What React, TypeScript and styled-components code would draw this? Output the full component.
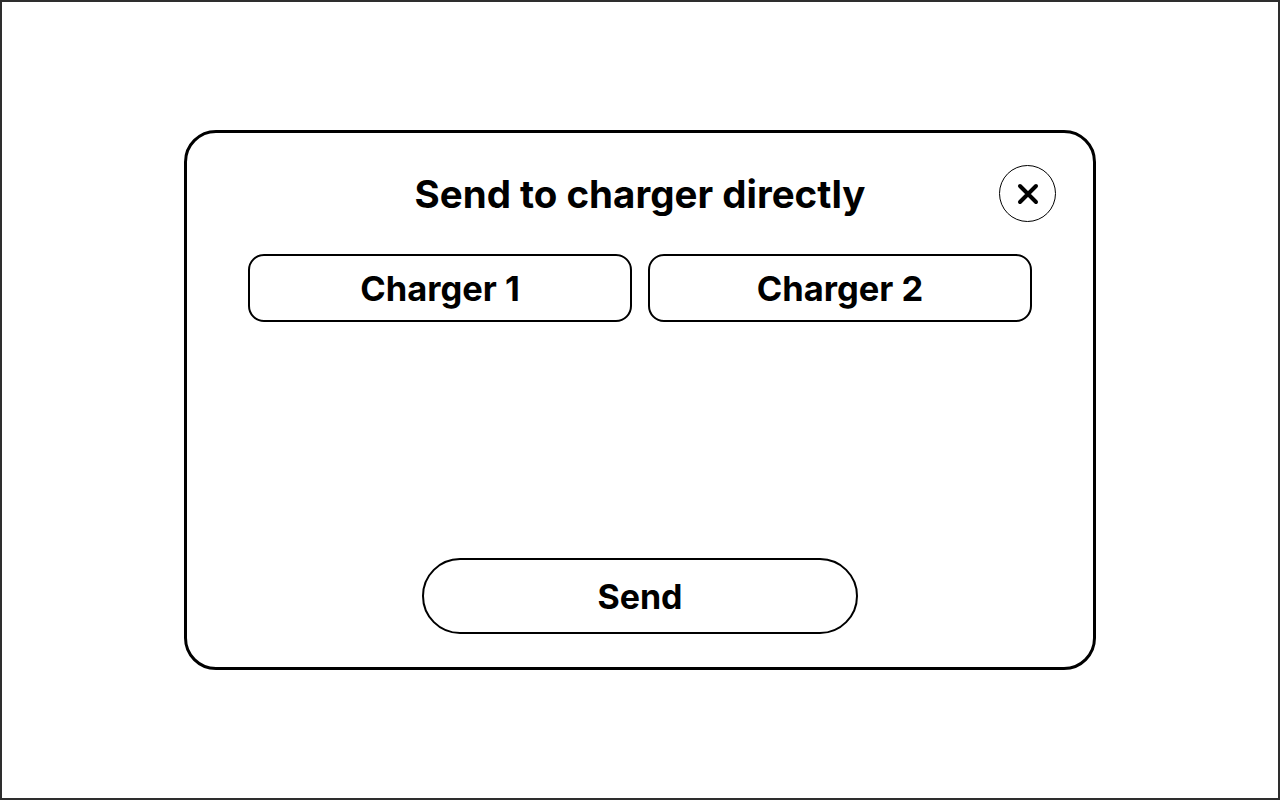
import React from 'react';
import styled, { createGlobalStyle } from 'styled-components';

const GlobalStyle = createGlobalStyle`
  * {
    box-sizing: border-box;
  }

  body {
    margin: 0;
    font-family: Inter, 'Noto Sans', sans-serif;
    color: #000;
    background: #fff;
  }
`;

const Screen = styled.div`
  width: 1280px;
  height: 800px;
  border: 2px solid #2e2e2e;
  display: flex;
  align-items: center;
  justify-content: center;
`;

const Modal = styled.div`
  width: 912px;
  height: 540px;
  border: 3px solid #000;
  border-radius: 32px;
  padding: 32px 37px 33px;
  display: flex;
  flex-direction: column;
  align-items: center;
`;

const Header = styled.div`
  width: 100%;
  display: grid;
  grid-template-columns: 57px 1fr 57px;
  align-items: center;
`;

const Title = styled.h2`
  grid-column: 2;
  margin: 0;
  text-align: center;
  font-size: 38.5px;
  font-weight: 700;
  line-height: 56px;
`;

const CloseButton = styled.button`
  grid-column: 3;
  width: 57px;
  height: 57px;
  border-radius: 50%;
  border: 1.5px solid #000;
  background: #fff;
  padding: 0;
  display: flex;
  align-items: center;
  justify-content: center;
  cursor: pointer;
`;

const ChargerRow = styled.div`
  margin-top: 32px;
  width: 784px;
  display: grid;
  grid-template-columns: 1fr 1fr;
  gap: 16px;
`;

const ChargerButton = styled.button`
  height: 68px;
  border: 2px solid #000;
  border-radius: 16px;
  background: #fff;
  font-family: inherit;
  font-size: 34.5px;
  font-weight: 700;
  color: #000;
  cursor: pointer;
`;

const SendButton = styled.button`
  margin-top: auto;
  width: 436px;
  height: 76px;
  border: 2px solid #000;
  border-radius: 38px;
  background: #fff;
  font-family: inherit;
  font-size: 34px;
  font-weight: 700;
  color: #000;
  cursor: pointer;
`;

const CloseIcon = () => (
  <svg width="22" height="22" viewBox="0 0 22 22" fill="none">
    <path d="M3 3L19 19M19 3L3 19" stroke="#000" strokeWidth="4" strokeLinecap="round" />
  </svg>
);

const App: React.FC = () => {
  const chargers = ['Charger 1', 'Charger 2'];

  return (
    <>
      <GlobalStyle />
      <Screen>
        <Modal>
          <Header>
            <Title>Send to charger directly</Title>
            <CloseButton aria-label="Close">
              <CloseIcon />
            </CloseButton>
          </Header>
          <ChargerRow>
            {chargers.map((name) => (
              <ChargerButton key={name}>{name}</ChargerButton>
            ))}
          </ChargerRow>
          <SendButton>Send</SendButton>
        </Modal>
      </Screen>
    </>
  );
};

export default App;
